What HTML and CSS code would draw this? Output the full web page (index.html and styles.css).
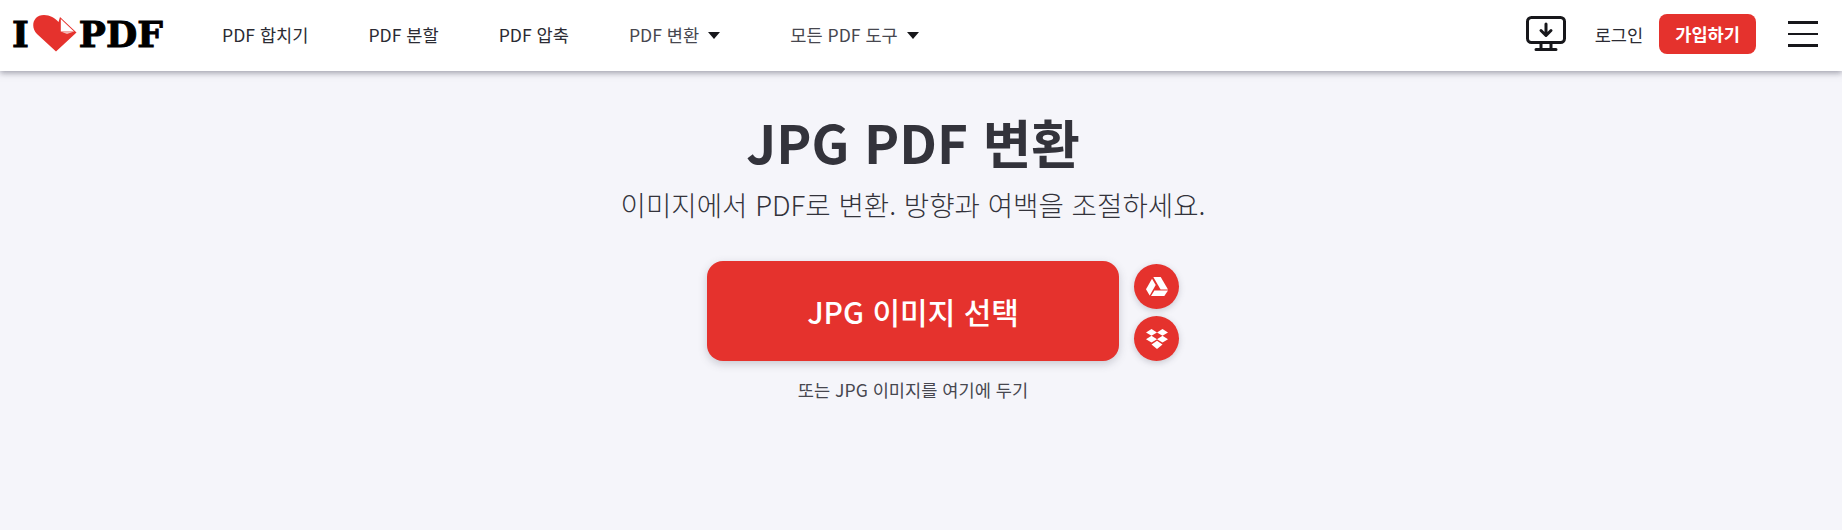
FILE: index.html
```html
<!DOCTYPE html>
<html lang="ko">
<head>
  <meta charset="UTF-8" />
  <title>JPG PDF 변환</title>
  <link rel="stylesheet" href="styles.css">
</head>

<body>
  <header class="cabecera">
    <a class="logo" href="#">
      <span>I</span>
      <svg class="logo-corazon" width="44" height="39" viewBox="0 0 44 39">
        <path fill="#e5322d" d="M23 37.5 L4 20 C-3 13 0 1 11 1 C17 1 22 4 25.5 8 L27 3 L43.5 18.5 Z"/>
        <path fill="#fff" d="M27.8 5 L41 17.4 L27.8 17.4 Z"/>
        <path fill="#f4b6b3" d="M27.8 17.4 L41 17.4 L34 20 Z"/>
      </svg>
      <span>PDF</span>
    </a>

    <nav class="menu">
      <a href="#">PDF 합치기</a>
      <a href="#">PDF 분할</a>
      <a href="#">PDF 압축</a>
      <a href="#" class="gris">PDF 변환<i class="flecha"></i></a>
      <a href="#" class="gris">모든 PDF 도구<i class="flecha"></i></a>
    </nav>

    <div class="derecha">
      <svg class="monitor" width="40" height="36" viewBox="0 0 40 36" fill="none" stroke="#17171b" stroke-width="3" stroke-linecap="round" stroke-linejoin="round">
        <rect x="1.5" y="1.5" width="37" height="25" rx="4"/>
        <path d="M20 8 V19 M15 14.5 L20 19.5 L25 14.5"/>
        <path d="M15 27 V33 M25 27 V33 M10 33.5 H30"/>
      </svg>
      <a class="login" href="#">로그인</a>
      <a class="registro" href="#">가입하기</a>
      <div class="hamburguesa"><span></span><span></span><span></span></div>
    </div>
  </header>

  <main class="contenido">
    <h1>JPG PDF 변환</h1>
    <p class="subtitulo">이미지에서 PDF로 변환. 방향과 여백을 조절하세요.</p>

    <div class="subida">
      <button class="seleccionar">JPG 이미지 선택</button>
      <div class="nubes">
        <a class="nube" href="#">
          <svg width="22" height="19" viewBox="0 0 22 19" fill="#fff">
            <path d="M7.3 0 H14.7 L22 12.4 H14.6 Z"/>
            <path d="M6 1.8 L9.7 8.1 L3.7 18.6 L0 12.3 Z"/>
            <path d="M8.4 13.4 H22 L18.3 19 H5 Z"/>
          </svg>
        </a>
        <a class="nube" href="#">
          <svg width="22" height="20" viewBox="0 0 22 20" fill="#fff">
            <path d="M5.5 0 L11 3.4 L5.5 6.8 L0 3.4 Z"/>
            <path d="M16.5 0 L22 3.4 L16.5 6.8 L11 3.4 Z"/>
            <path d="M5.5 6.8 L11 10.2 L5.5 13.6 L0 10.2 Z"/>
            <path d="M16.5 6.8 L22 10.2 L16.5 13.6 L11 10.2 Z"/>
            <path d="M5.5 15.4 L11 11.8 L16.5 15.4 L11 20 Z"/>
          </svg>
        </a>
      </div>
    </div>

    <p class="soltar">또는 JPG 이미지를 여기에 두기</p>
  </main>
</body>
</html>
```

FILE: styles.css
```css
* {
  box-sizing: border-box;
}

html, body {
  height: 100%;
}

body {
  margin: 0;
  overflow: hidden;
  background-color: #f5f5fa;
  color: #33333b;
  font-family: "Noto Sans CJK KR", "Noto Sans", sans-serif;
}

a {
  color: inherit;
  text-decoration: none;
}

.cabecera {
  display: flex;
  align-items: center;
  height: 71px;
  padding: 0 24px 3px 12px;
  background-color: #fff;
  box-shadow: 0 2px 6px rgba(72, 72, 90, 0.5);
}

.logo {
  display: flex;
  align-items: center;
  width: 151px;
  flex: none;
  color: #000;
  font-family: "DejaVu Serif", serif;
  font-size: 36px;
  font-weight: bold;
  line-height: 1;
  -webkit-text-stroke: 1px #000;
}

.logo-corazon {
  flex: none;
  margin: -2px 2px 0 4px;
}

.menu {
  display: flex;
  gap: 60px;
  margin-left: 59px;
  font-size: 17.6px;
  color: #2b2b33;
}

.menu .gris {
  padding-right: 10px;
  color: #47474f;
}

.flecha {
  display: inline-block;
  margin-left: 9px;
  vertical-align: 3px;
  border-left: 6px solid transparent;
  border-right: 6px solid transparent;
  border-top: 7px solid #17171b;
}

.derecha {
  display: flex;
  align-items: center;
  margin-left: auto;
}

.login {
  margin-left: 29px;
  font-size: 17.6px;
  color: #2b2b33;
}

.registro {
  margin-left: 16px;
  padding: 0 16px;
  height: 40px;
  line-height: 40px;
  border-radius: 8px;
  background-color: #e5322d;
  color: #fff;
  font-size: 17.6px;
  font-weight: 700;
}

.hamburguesa {
  display: flex;
  flex-direction: column;
  gap: 9px;
  width: 30px;
  margin-left: 32px;
}

.hamburguesa span {
  height: 2.5px;
  background-color: #17171b;
}

.contenido {
  padding-right: 16px;
  text-align: center;
}

h1 {
  margin: 35px 0 0;
  font-size: 52.8px;
  font-weight: 600;
  line-height: 70px;
}

.subtitulo {
  margin: 8px 0 0;
  font-size: 27.6px;
  font-weight: 300;
  line-height: 40px;
  color: #33333b;
}

.subida {
  display: grid;
  grid-template-columns: 1fr 412px 1fr;
  column-gap: 15px;
  margin-top: 37px;
}

.seleccionar {
  grid-column: 2;
  height: 100px;
  border: none;
  border-radius: 16px;
  background-color: #e5322d;
  color: #fff;
  font-family: inherit;
  font-size: 30px;
  font-weight: 500;
  cursor: pointer;
  box-shadow: 0 3px 8px rgba(72, 72, 90, 0.25);
}

.nubes {
  display: flex;
  flex-direction: column;
  gap: 7px;
  padding-top: 3px;
}

.nube {
  display: flex;
  align-items: center;
  justify-content: center;
  width: 45px;
  height: 45px;
  border-radius: 50%;
  background-color: #e5322d;
  box-shadow: 0 2px 6px rgba(72, 72, 90, 0.25);
}

.soltar {
  margin: 16px 0 0;
  font-size: 17.6px;
  font-weight: 400;
  color: #47474f;
}
```
